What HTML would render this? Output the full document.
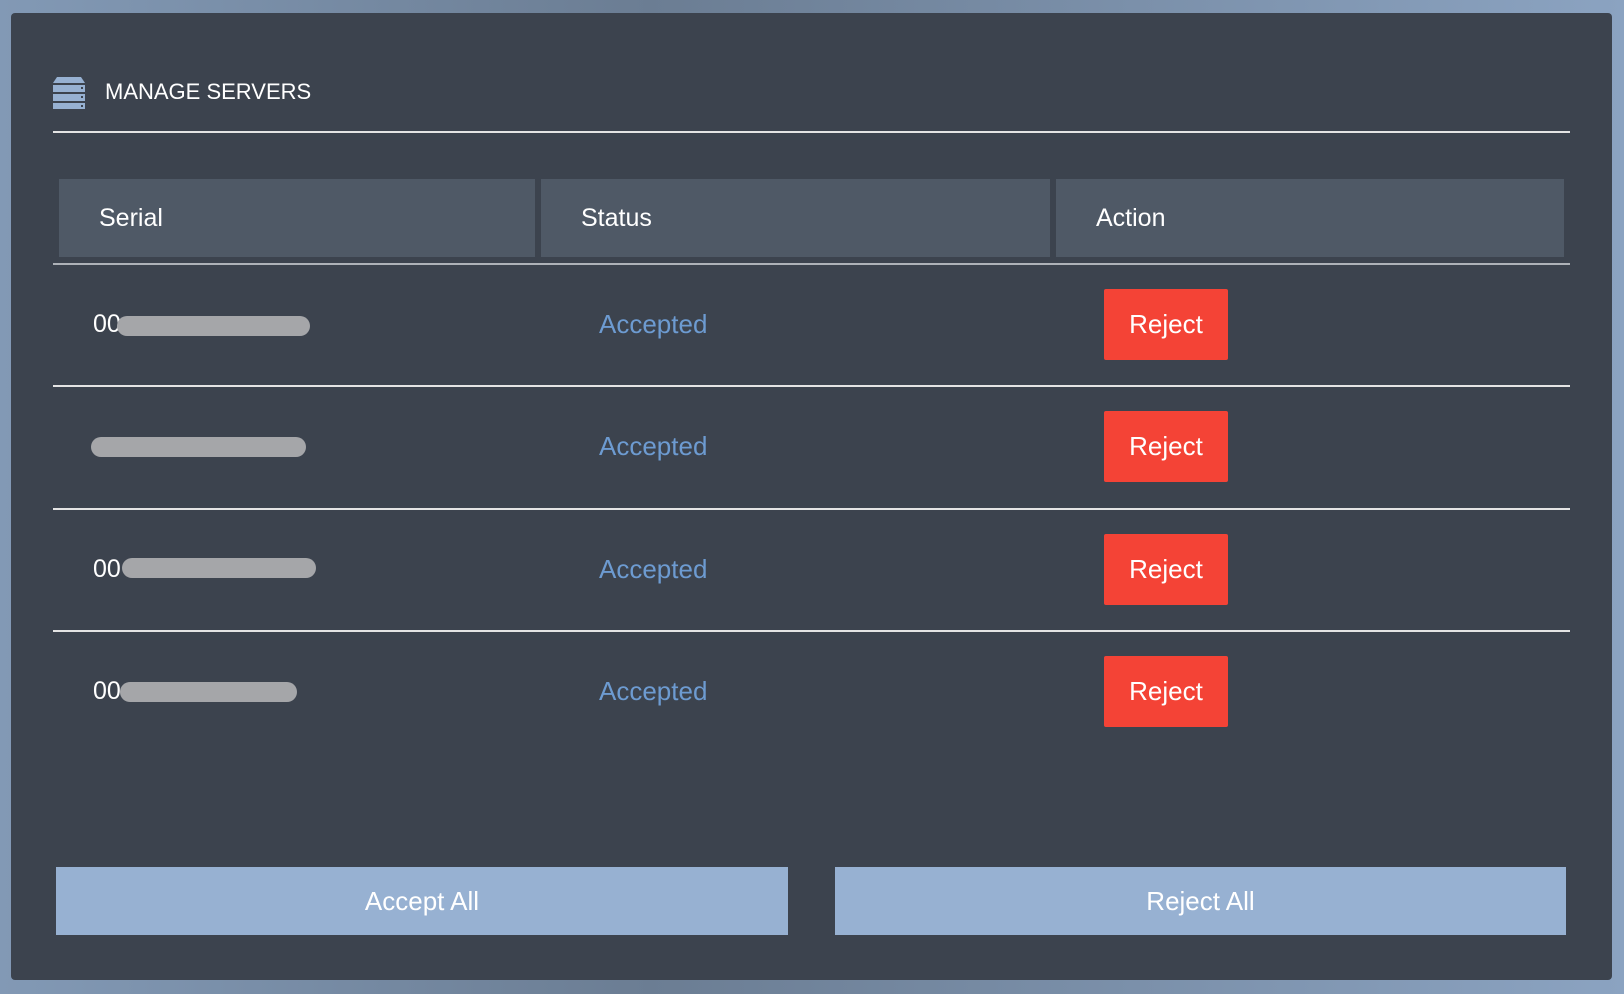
<!DOCTYPE html>
<html><head><meta charset="utf-8"><style>
*{margin:0;padding:0;box-sizing:border-box}
body{width:1624px;height:994px;overflow:hidden;background:linear-gradient(90deg,#8299b5,#6b7d93 40%,#8ba3c1);font-family:"Liberation Sans",sans-serif;position:relative}
.p{position:absolute;left:11px;top:13px;width:1601px;height:967px;background:#3c434e;border-radius:4px}
.a{position:absolute}
.t{color:#fff;font-size:22px}
.hr{position:absolute;left:53px;width:1517px;height:2px;background:#e4e4e4}
.hc{position:absolute;top:179px;height:78px;background:#4f5966;color:#fff;font-size:25px;line-height:78px;padding-left:40px}
.sr{position:absolute;left:93px;color:#fff;font-size:25px}
.bl{position:absolute;height:20px;border-radius:10px;background:#a5a6a9}
.ac{position:absolute;left:599px;color:#6d9bd1;font-size:26px}
.rj{position:absolute;left:1104px;width:124px;height:71px;background:#f44336;border-radius:2px;color:#fff;font-size:26px;text-align:center;line-height:71px}
.bb{position:absolute;top:867px;height:68px;background:#97b1d2;color:#fff;font-size:26px;text-align:center;line-height:68px}
</style></head><body>
<div class="p"></div>
<svg class="a" style="left:53px;top:77px" width="32" height="32" viewBox="0 0 32 32"><path d="M4 0H28L32 6H0Z" fill="#97b1d2"/><rect x="0" y="8" width="32" height="7" fill="#97b1d2"/><rect x="0" y="17" width="32" height="7" fill="#97b1d2"/><rect x="0" y="26" width="32" height="6" fill="#97b1d2"/><rect x="28" y="10" width="2" height="2" fill="#3c434e"/><rect x="28" y="19" width="2" height="2" fill="#3c434e"/><rect x="28" y="28" width="2" height="2" fill="#3c434e"/></svg>
<div class="a t" style="left:105px;top:79px">MANAGE SERVERS</div>
<div class="hr" style="top:131px"></div>
<div class="hc" style="left:59px;width:476px">Serial</div>
<div class="hc" style="left:541px;width:509px">Status</div>
<div class="hc" style="left:1056px;width:508px">Action</div>
<div class="hr" style="top:263px;background:#aeb2b8"></div>
<div class="hr" style="top:385px"></div>
<div class="hr" style="top:508px"></div>
<div class="hr" style="top:630px"></div>

<div class="sr" style="top:310px">00</div><div class="bl" style="left:117px;top:316px;width:193px"></div>
<div class="bl" style="left:91px;top:437px;width:215px"></div>
<div class="sr" style="top:555px">00</div><div class="bl" style="left:122px;top:558px;width:194px"></div>
<div class="sr" style="top:677px">00</div><div class="bl" style="left:120px;top:682px;width:177px"></div>

<div class="ac" style="top:309px">Accepted</div>
<div class="ac" style="top:431px">Accepted</div>
<div class="ac" style="top:554px">Accepted</div>
<div class="ac" style="top:676px">Accepted</div>
<div class="rj" style="top:289px">Reject</div>
<div class="rj" style="top:411px">Reject</div>
<div class="rj" style="top:534px">Reject</div>
<div class="rj" style="top:656px">Reject</div>

<div class="bb" style="left:56px;width:732px">Accept All</div>
<div class="bb" style="left:835px;width:731px">Reject All</div>
</body></html>
